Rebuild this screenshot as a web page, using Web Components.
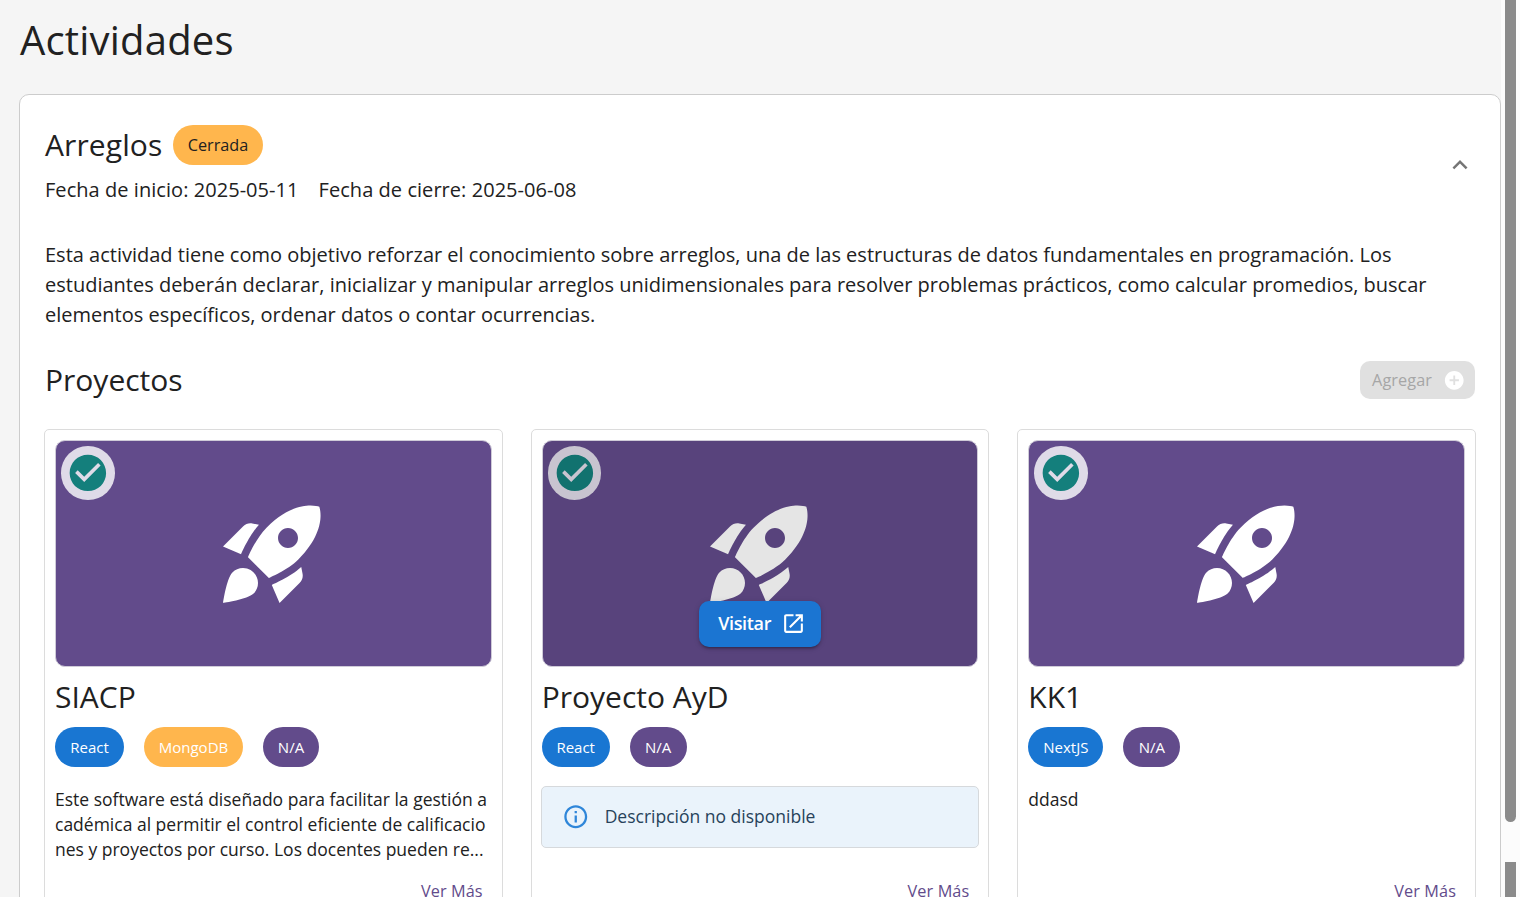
<!DOCTYPE html>
<html lang="es">
<head>
<meta charset="utf-8">
<title>Actividades</title>
<style>
html,body{margin:0;height:100%;overflow:hidden}
body{font-family:"Open Sans","Noto Sans",sans-serif;color:#212121;background:#f5f5f5}
</style>
</head>
<body>
<app-page>
  <activity-panel name="Arreglos" status="Cerrada" start="2025-05-11" end="2025-06-08">
    <span slot="description">Esta actividad tiene como objetivo reforzar el conocimiento sobre arreglos, una de las estructuras de datos fundamentales en programación. Los estudiantes deberán declarar, inicializar y manipular arreglos unidimensionales para resolver problemas prácticos, como calcular promedios, buscar elementos específicos, ordenar datos o contar ocurrencias.</span>
    <project-card name="SIACP">
      <tag-chip slot="tags" style="--w:69px">React</tag-chip><tag-chip slot="tags" tone="orange" style="--w:99px">MongoDB</tag-chip><tag-chip slot="tags" tone="purple" style="--w:56px">N/A</tag-chip>
      Este software está diseñado para facilitar la gestión académica al permitir el control eficiente de calificaciones y proyectos por curso. Los docentes pueden re...
    </project-card>
    <project-card name="Proyecto AyD" hovered>
      <tag-chip slot="tags" style="--w:68px">React</tag-chip><tag-chip slot="tags" tone="purple" style="--w:57px">N/A</tag-chip>
      <info-alert slot="alert">Descripción no disponible</info-alert>
    </project-card>
    <project-card name="KK1">
      <tag-chip slot="tags" style="--w:75px">NextJS</tag-chip><tag-chip slot="tags" tone="purple" style="--w:57px">N/A</tag-chip>
      ddasd
    </project-card>
  </activity-panel>
</app-page>
<script>
const ICONS = {
  up: 'm12 8-6 6 1.41 1.41L12 10.83l4.59 4.58L18 14z',
  check: 'M12 2C6.48 2 2 6.48 2 12s4.48 10 10 10 10-4.48 10-10S17.52 2 12 2m-2 15-5-5 1.41-1.41L10 14.17l7.59-7.59L19 8z',
  add: 'M12 2C6.48 2 2 6.48 2 12s4.48 10 10 10 10-4.48 10-10S17.52 2 12 2m5 11h-4v4h-2v-4H7v-2h4V7h2v4h4z',
  open: 'M19 19H5V5h7V3H5c-1.11 0-2 .9-2 2v14c0 1.1.89 2 2 2h14c1.1 0 2-.9 2-2v-7h-2zM14 3v2h3.59l-9.83 9.83 1.41 1.41L19 6.41V10h2V3z',
  info: 'M11 7h2v2h-2zm0 4h2v6h-2zm1-9C6.48 2 2 6.48 2 12s4.48 10 10 10 10-4.48 10-10S17.52 2 12 2m0 18c-4.41 0-8-3.59-8-8s3.59-8 8-8 8 3.59 8 8-3.59 8-8 8',
  rocket: 'M9.19 6.35c-2.04 2.29-3.44 5.58-3.57 5.89L2 10.69l4.05-4.05c.47-.47 1.15-.68 1.81-.55zM11.17 17s3.74-1.55 5.89-3.7c5.4-5.4 4.5-9.62 4.21-10.57-.95-.3-5.17-1.19-10.57 4.21C8.55 9.09 7 12.83 7 12.83zm6.48-2.19c-2.29 2.04-5.58 3.44-5.89 3.57L13.31 22l4.05-4.05c.47-.47.68-1.15.55-1.81zM9 18c0 .83-.34 1.58-.88 2.12C6.94 21.3 2 22 2 22s.7-4.94 1.88-6.12C4.42 15.34 5.17 15 6 15c1.66 0 3 1.34 3 3m4-9c0-1.1.9-2 2-2s2 .9 2 2-.9 2-2 2-2-.9-2-2'
};
function define(tag, render) {
  customElements.define(tag, class extends HTMLElement {
    constructor() { super(); this.attachShadow({ mode: 'open' }); }
    connectedCallback() { this.shadowRoot.innerHTML = render(this); }
  });
}

define('ui-icon', el => `<style>:host{display:block;flex:none;width:var(--size,24px);height:var(--size,24px)}svg{display:block;width:100%;height:100%;fill:currentColor}</style>
<svg viewBox="0 0 24 24"><path d="${ICONS[el.getAttribute('name')]}"/></svg>`);

define('tag-chip', () => `<style>
:host{display:flex;align-items:center;justify-content:center;box-sizing:border-box;width:var(--w,auto);height:40px;border-radius:20px;background:#1976d2;color:#fff;font-size:15px;font-weight:500;white-space:nowrap}
:host([tone=orange]){background:#ffb64d}
:host([tone=purple]){background:#624b8b}
:host([tone=status]){background:#ffb64d;color:#212121;font-size:16.25px;font-weight:400}
</style><slot></slot>`);

define('info-alert', () => `<style>
:host{display:flex;align-items:center;box-sizing:border-box;height:62px;padding-left:20px;gap:15.5px;border:1px solid #d6d9dc;border-radius:5px;background:#eaf3fb;color:#27425a;font-size:17.5px;line-height:25px}
ui-icon{--size:27.5px;color:#2f86d9}
span{margin-top:-1px}
</style><ui-icon name="info"></ui-icon><span><slot></slot></span>`);

define('project-card', el => `<style>
:host{display:flex;flex-direction:column;box-sizing:border-box;height:560px;padding:10px;border:1px solid #dcdcdc;border-radius:5px;background:#fff;min-width:0}
.cover{position:relative;display:flex;align-items:center;justify-content:center;box-sizing:border-box;height:227px;border:1px solid #cfcbd8;border-radius:10px;background:#624b8b;color:#fff;overflow:hidden;flex:none}
.cover>ui-icon{--size:120px;margin-top:-1px}
.badge{position:absolute;left:5px;top:5px;padding:5px;border-radius:50%;background:rgba(255,255,255,.8);color:#147f7c}
.badge ui-icon{--size:43.75px}
.shade{position:absolute;inset:0;background:rgba(0,0,0,.1)}
.visit{position:absolute;left:156px;top:159.5px;width:122px;height:46px;box-sizing:border-box;padding-left:19.5px;border-radius:10px;background:#1b75d2;display:flex;align-items:center;gap:10px;font-size:18px;font-weight:600;letter-spacing:-.35px;box-shadow:0 3px 2px -2px rgba(0,0,0,.2),0 2px 3px rgba(0,0,0,.16),0 1px 6px rgba(0,0,0,.12)}
.visit span{margin-top:-1px}
.visit ui-icon{--size:25px}
h3{margin:10px 0 10px;font-size:30px;line-height:40px;font-weight:400;height:40px}
.tags{display:flex;gap:20px;height:40px}
.text{margin:20px 0 0;height:75px;font-size:17.5px;line-height:25px;word-break:break-all}
.alert{margin:19px -1px 0;height:76px}
.more{align-self:flex-end;margin:17px 9px 0 0;font-size:16.25px;line-height:25px;font-weight:500;letter-spacing:.1px;color:#624b8b}
</style>
<div class="cover"><ui-icon name="rocket"></ui-icon><div class="badge"><ui-icon name="check"></ui-icon></div>
${el.hasAttribute('hovered') ? '<div class="shade"></div><div class="visit"><span>Visitar</span><ui-icon name="open"></ui-icon></div>' : ''}</div>
<h3>${el.getAttribute('name')}</h3>
<div class="tags"><slot name="tags"></slot></div>
${el.hasAttribute('hovered') ? '<div class="alert"><slot name="alert"></slot></div>' : '<div class="text"><slot></slot></div>'}
<div class="more">Ver Más</div>`);

define('activity-panel', el => `<style>
:host{display:block;box-sizing:border-box;height:1100px;margin-top:13px;padding:30px 24px 0 24px;border:1px solid #ccc;border-radius:10px;background:#fff}
header{display:flex;justify-content:space-between;height:80px;align-items:center}
header ui-icon{--size:30px;color:#757575;margin-right:1px}
.title{display:flex;align-items:center;height:40px}
.title h2{width:129px;letter-spacing:.1px}
h2{margin:0;font-size:30px;font-weight:400;line-height:40px;padding-left:1px;box-sizing:border-box}
.dates{display:flex;gap:20px;padding-left:1px;margin-top:10px;font-size:20px;line-height:30px;letter-spacing:.05px}
.desc{margin:35px 0 0 1px;font-size:20px;line-height:30px;height:90px;width:1400px}
.bar{display:flex;align-items:center;justify-content:space-between;margin-top:31px;height:38px}
.add{display:flex;align-items:center;justify-content:space-between;box-sizing:border-box;width:115px;height:38px;padding:0 10px 0 12px;margin-right:1px;border-radius:10px;background:#e0e0e0;color:#a6a6a6;font-size:16.25px;font-weight:500;letter-spacing:.1px}
.add ui-icon{--size:22.5px;color:#fff}
.grid{display:grid;grid-template-columns:repeat(3,458.67px);justify-content:space-between;margin-top:30px}
</style>
<header><div><div class="title"><h2>${el.getAttribute('name')}</h2><tag-chip tone="status" style="--w:90px">${el.getAttribute('status')}</tag-chip></div>
<div class="dates"><span>Fecha de inicio: ${el.getAttribute('start')}</span><span>Fecha de cierre: ${el.getAttribute('end')}</span></div></div><ui-icon name="up"></ui-icon></header>
<div class="desc"><slot name="description"></slot></div>
<div class="bar"><h2>Proyectos</h2><div class="add"><span>Agregar</span><ui-icon name="add"></ui-icon></div></div>
<div class="grid"><slot></slot></div>`);

define('app-page', () => `<style>
:host{display:flex;height:897px;overflow:hidden}
main{width:1501px;flex:none;box-sizing:border-box;padding-left:19px;height:897px;overflow:hidden}
h1{margin:0;padding:13px 0 14px 1px;font-size:40px;line-height:54px;font-weight:400;letter-spacing:.2px}
.track{width:19px;box-sizing:border-box;padding:0 4px;background:#fcfcfc;display:flex;flex-direction:column;gap:40px}
.thumb{background:#8b8b8b;height:822px;border-radius:0 0 6px 6px;flex:none}
.next{background:#8b8b8b;flex:1}
</style>
<main><h1>Actividades</h1><slot></slot></main><div class="track"><div class="thumb"></div><div class="next"></div></div>`);
</script>
</body>
</html>
